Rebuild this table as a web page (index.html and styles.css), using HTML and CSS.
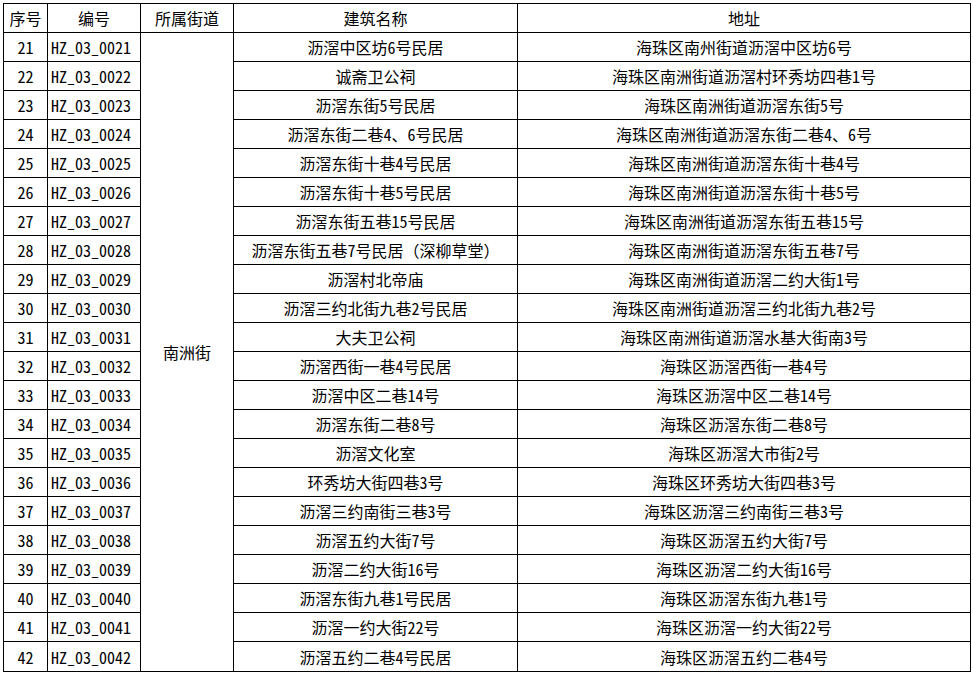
FILE: index.html
```html
<!DOCTYPE html>
<html lang="zh-CN">
<head>
<meta charset="utf-8">
<link rel="stylesheet" href="styles.css">
</head>
<body>
<div class="sheet">
  <div class="cell head">序号</div>
  <div class="cell head">编号</div>
  <div class="cell head">所属街道</div>
  <div class="cell head">建筑名称</div>
  <div class="cell head">地址</div>

  <div class="cell">21</div><div class="cell code">HZ_03_0021</div><div class="cell street">南洲街</div><div class="cell">沥滘中区坊6号民居</div><div class="cell">海珠区南州街道沥滘中区坊6号</div>
  <div class="cell">22</div><div class="cell code">HZ_03_0022</div><div class="cell">诚斋卫公祠</div><div class="cell">海珠区南洲街道沥滘村环秀坊四巷1号</div>
  <div class="cell">23</div><div class="cell code">HZ_03_0023</div><div class="cell">沥滘东街5号民居</div><div class="cell">海珠区南洲街道沥滘东街5号</div>
  <div class="cell">24</div><div class="cell code">HZ_03_0024</div><div class="cell">沥滘东街二巷4、6号民居</div><div class="cell">海珠区南洲街道沥滘东街二巷4、6号</div>
  <div class="cell">25</div><div class="cell code">HZ_03_0025</div><div class="cell">沥滘东街十巷4号民居</div><div class="cell">海珠区南洲街道沥滘东街十巷4号</div>
  <div class="cell">26</div><div class="cell code">HZ_03_0026</div><div class="cell">沥滘东街十巷5号民居</div><div class="cell">海珠区南洲街道沥滘东街十巷5号</div>
  <div class="cell">27</div><div class="cell code">HZ_03_0027</div><div class="cell">沥滘东街五巷15号民居</div><div class="cell">海珠区南洲街道沥滘东街五巷15号</div>
  <div class="cell">28</div><div class="cell code">HZ_03_0028</div><div class="cell">沥滘东街五巷7号民居（深柳草堂）</div><div class="cell">海珠区南洲街道沥滘东街五巷7号</div>
  <div class="cell">29</div><div class="cell code">HZ_03_0029</div><div class="cell">沥滘村北帝庙</div><div class="cell">海珠区南洲街道沥滘二约大街1号</div>
  <div class="cell">30</div><div class="cell code">HZ_03_0030</div><div class="cell">沥滘三约北街九巷2号民居</div><div class="cell">海珠区南洲街道沥滘三约北街九巷2号</div>
  <div class="cell">31</div><div class="cell code">HZ_03_0031</div><div class="cell">大夫卫公祠</div><div class="cell">海珠区南洲街道沥滘水基大街南3号</div>
  <div class="cell">32</div><div class="cell code">HZ_03_0032</div><div class="cell">沥滘西街一巷4号民居</div><div class="cell">海珠区沥滘西街一巷4号</div>
  <div class="cell">33</div><div class="cell code">HZ_03_0033</div><div class="cell">沥滘中区二巷14号</div><div class="cell">海珠区沥滘中区二巷14号</div>
  <div class="cell">34</div><div class="cell code">HZ_03_0034</div><div class="cell">沥滘东街二巷8号</div><div class="cell">海珠区沥滘东街二巷8号</div>
  <div class="cell">35</div><div class="cell code">HZ_03_0035</div><div class="cell">沥滘文化室</div><div class="cell">海珠区沥滘大市街2号</div>
  <div class="cell">36</div><div class="cell code">HZ_03_0036</div><div class="cell">环秀坊大街四巷3号</div><div class="cell">海珠区环秀坊大街四巷3号</div>
  <div class="cell">37</div><div class="cell code">HZ_03_0037</div><div class="cell">沥滘三约南街三巷3号</div><div class="cell">海珠区沥滘三约南街三巷3号</div>
  <div class="cell">38</div><div class="cell code">HZ_03_0038</div><div class="cell">沥滘五约大街7号</div><div class="cell">海珠区沥滘五约大街7号</div>
  <div class="cell">39</div><div class="cell code">HZ_03_0039</div><div class="cell">沥滘二约大街16号</div><div class="cell">海珠区沥滘二约大街16号</div>
  <div class="cell">40</div><div class="cell code">HZ_03_0040</div><div class="cell">沥滘东街九巷1号民居</div><div class="cell">海珠区沥滘东街九巷1号</div>
  <div class="cell">41</div><div class="cell code">HZ_03_0041</div><div class="cell">沥滘一约大街22号</div><div class="cell">海珠区沥滘一约大街22号</div>
  <div class="cell">42</div><div class="cell code">HZ_03_0042</div><div class="cell">沥滘五约二巷4号民居</div><div class="cell">海珠区沥滘五约二巷4号</div>
</div>
</body>
</html>
```

FILE: styles.css
```css
html, body {
  margin: 0;
  padding: 0;
  background: #ffffff;
}

body {
  font-family: "Noto Sans Mono CJK SC", "Noto Sans CJK SC", sans-serif;
  font-size: 16px;
  color: #000000;
}

.sheet {
  display: grid;
  grid-template-columns: 43px 92px 92px 283px 452px;
  grid-template-rows: repeat(22, 28px) 29px;
  gap: 1px;
  padding: 1px;
  background: #000000;
  width: max-content;
  margin: 3px 0 0 3px;
}

.cell {
  background: #ffffff;
  display: flex;
  align-items: center;
  justify-content: center;
  white-space: nowrap;
  overflow: hidden;
  line-height: 1;
}

.head {
  font-weight: 500;
}

.code {
  justify-content: flex-start;
  padding-left: 3px;
}

.street {
  grid-column: 3;
  grid-row: 2 / span 22;
}
```
